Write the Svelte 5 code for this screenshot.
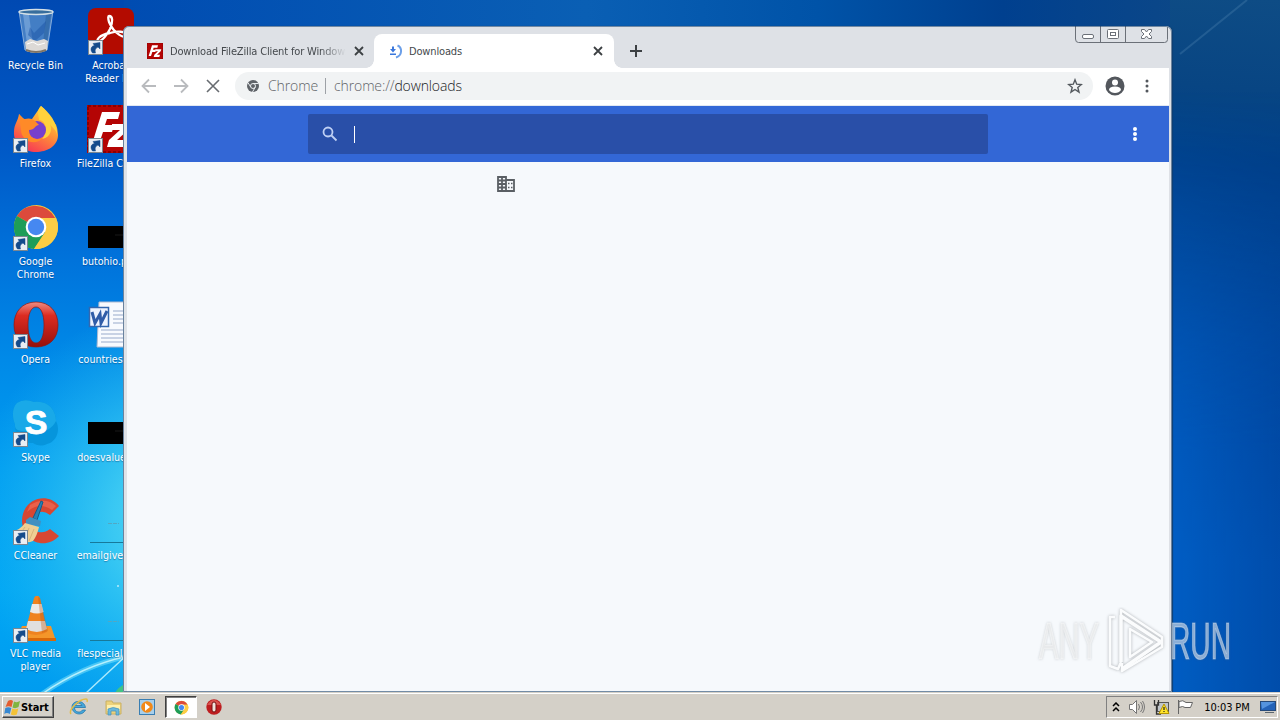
<script>
  const desktopLeft = [
    { icon: 'bin', lines: ['Recycle Bin'], shortcut: false },
    { icon: 'firefox', lines: ['Firefox'], shortcut: true },
    { icon: 'chrome', lines: ['Google', 'Chrome'], shortcut: true },
    { icon: 'opera', lines: ['Opera'], shortcut: true },
    { icon: 'skype', lines: ['Skype'], shortcut: true },
    { icon: 'ccleaner', lines: ['CCleaner'], shortcut: true },
    { icon: 'vlc', lines: ['VLC media', 'player'], shortcut: true }
  ];

  const desktopRight = [
    { icon: 'acrobat', lines: ['Acrobat', 'Reader DC'], shortcut: true },
    { icon: 'filezilla', lines: ['FileZilla Client'], shortcut: true },
    { icon: 'black', lines: ['butohio.png'], shortcut: false },
    { icon: 'word', lines: ['countriese.rtf'], shortcut: false },
    { icon: 'black', lines: ['doesvalue.jpg'], shortcut: false },
    { icon: 'line', lines: ['emailgive.png'], shortcut: false },
    { icon: 'line', lines: ['flespecial.png'], shortcut: false }
  ];

  const columns = [desktopLeft, desktopRight];
</script>

{#snippet chromeLogo(size)}
  <svg width={size} height={size} viewBox="0 0 48 48">
    <circle cx="24" cy="24" r="22" fill="#fbc93b" />
    <path d="M24 24 4.900 13A22 22 0 0 1 43.100 15H24z" fill="#dc4a3c" />
    <path d="M4.900 13A22 22 0 0 0 22 46l11-17-9-5z" fill="#1e9d58" />
    <path d="M44 15H24v9l9.500 5.500L22 46A22 22 0 0 0 44 15z" fill="#fccd45" />
    <circle cx="24" cy="24" r="10.300" fill="#fff" />
    <circle cx="24" cy="24" r="8.200" fill="#4688f1" />
  </svg>
{/snippet}

{#snippet fz(size)}
  <svg width={size} height={size} viewBox="0 0 48 48">
    <rect width="48" height="48" fill="#b40404" />
    <rect x="1" y="1" width="46" height="46" fill="none" stroke="#8a0000" stroke-width="2" stroke-dasharray="3 2" />
    <path d="M15 7h18l-2 7H20l-2 6h9l-2 7h-9l-4 12H5z" fill="#fff" />
    <path d="M25 19h18l-2 6-11 10h9l-2 7H20l2-7 11-10h-8z" fill="#fff" />
  </svg>
{/snippet}

{#snippet appIcon(name)}
  {#if name === 'chrome'}
    {@render chromeLogo(48)}
  {:else if name === 'filezilla'}
    {@render fz(48)}
  {:else}
    <svg width="48" height="48" viewBox="0 0 48 48">
      {#if name === 'bin'}
        <path d="m7 4 6 39q11 5 22 0l6-39z" fill="#5a8fca" fill-opacity=".75" stroke="#86addb" />
        <path d="m11 7 4 30h6L17 8z" fill="#9dc1e8" opacity=".45" />
        <path d="m34 7-3 30 4-1 4-29z" fill="#285e98" opacity=".5" />
        <path d="m18 20 4 6 9-9 3-3-2 12-9 8-7-6z" fill="#1c54a5" opacity=".5" />
        <path d="m13 35 5-3 7 2 7-2 4 2-1 9q-10 5-21 1z" fill="#dcd9d6" />
        <path d="m15 37 6-2 5 3 7-2" fill="none" stroke="#fff" />
        <path d="M14 43q10 4 20 0" fill="none" stroke="#807567" stroke-width="2" />
        <ellipse cx="24" cy="5" rx="17" ry="2.500" fill="#386e9d" stroke="#d4e0e6" stroke-width="1.300" />
      {:else if name === 'firefox'}
        <defs>
          <linearGradient id="ff" x1=".8" y1="0" x2=".25" y2="1">
            <stop offset="0" stop-color="#ffe23f" />
            <stop offset=".45" stop-color="#ff9636" />
            <stop offset="1" stop-color="#f63057" />
          </linearGradient>
        </defs>
        <path d="M29 1q7 6 8 11 9 6 9 18c0 11-11 17-22 17S1 39 2 27c0-8 4-11 5-18l6 6 7-1z" fill="url(#ff)" />
        <path d="M29 1c-5 5-2 10-2 14 8 1 9 13 3 19 10-2 10-11 8-15 3 5 6 5 7 11C46 18 37 7 29 1z" fill="#ffd13c" />
        <circle cx="25" cy="25" r="9" fill="#7740cd" />
        <path d="M7 9q3 5 6 5c3-1 7-1 10 2l4 4c-4 0-4 5-10 5 0 8 7 11 14 8-9 9-22 2-22-8z" fill="#ff8a28" />
      {:else if name === 'opera'}
        <defs>
          <linearGradient id="op" x1="0" y1="0" x2="0" y2="1">
            <stop offset="0" stop-color="#ef8d82" />
            <stop offset=".3" stop-color="#dc2c21" />
            <stop offset="1" stop-color="#97100c" />
          </linearGradient>
        </defs>
        <path fill-rule="evenodd" d="M24 1C10 1 2 11 2 24s8 22 22 22 22-9 22-22S38 1 24 1zm0 5c5 0 8 7 8 18s-3 18-8 18-8-7-8-18 3-18 8-18z" fill="url(#op)" stroke="#8d1712" stroke-width=".7" />
      {:else if name === 'skype'}
        <path d="M5 4Q12-1 22 3c13-2 22 7 22 19 5 10 0 21-9 23-6 3-11 1-14-1C9 45 2 35 3 25 0 18 0 9 5 4z" fill="#0695dc" />
        <path d="M5 4Q12-1 22 3c13-2 22 7 22 19-5 10-16 13-23 10C9 33 2 32 3 25 0 18 0 9 5 4z" fill="#19a9e8" />
        <text x="24" y="35" text-anchor="middle" class="skype-letter">S</text>
      {:else if name === 'ccleaner'}
        <path d="m47 9-9 9q-11-8-17 4c-4 10 7 18 17 10l9 7c-13 14-36 7-37-15C10 2 35-6 47 9z" fill="#d84732" />
        <path d="M18 8q15-9 26 1l-4 4q-13-9-25 2z" fill="#e9604a" />
        <path d="m29 4 2 1-6 18-4-2z" fill="#2383b7" stroke="#145b8b" />
        <path d="m14 23 4-3 11 4-1 5-14-1z" fill="#428fc0" />
        <path d="m13 26 14 4q-2 9-6 14-12 5-20-10 7-1 12-8z" fill="#efcf94" />
        <path d="m13 30-5 7m9-6-4 11m9-10-5 12" stroke="#d9b479" fill="none" />
      {:else if name === 'vlc'}
        <path d="M10 31h29l5 15H3z" fill="#f4962a" />
        <path d="M3 43h41v3H3z" fill="#d86809" />
        <path d="m22 3 1.500-2h3L28 3l7 34q-11 6-22 0z" fill="#ef8320" />
        <path d="m20 9 9.500 0 2 8q-6 3-13.500 0z" fill="#ece9e7" />
        <path d="m16 26 17 0 2 8q-10 6-21 0z" fill="#e0dfde" />
        <path d="m26 2 2 1 8 33-6 2z" fill="#ba5a14" opacity=".35" />
      {:else if name === 'acrobat'}
        <rect x="1" y="1" width="46" height="46" rx="8" fill="#b30b00" />
        <path d="M22 9c4 0 4 6 1 13-3 6-8 12-11 12-4 0 0-6 11-8 7-2 16-2 16 2 0 5-12-1-17-13-1-4-1-6 0-6z" fill="none" stroke="#fff" stroke-width="2.300" />
      {:else if name === 'word'}
        <path d="M12 1h36v45H10z" fill="#f8fafe" stroke="#afbad0" />
        <path d="M26 10h22M26 14h22M26 18h22M26 22h22M14 29h34M14 33h34M14 37h34M14 41h34" stroke="#98aacb" />
        <rect x="2.500" y="6.500" width="19" height="19" fill="#eef3ff" stroke="#3467af" stroke-width="1.500" />
        <path d="m5 11 3 11 5-9 1 9 6-12" fill="none" stroke="#305ca8" stroke-width="3" />
      {:else if name === 'black'}
        <rect x="1" y="23" width="47" height="22" fill="#000" />
        <path d="M28 32h8" stroke="#191919" />
      {:else if name === 'line'}
        <path d="M3 45.500h45" stroke="#17799a" />
        <path d="M21 26.500h11" stroke="#53a7c3" stroke-dasharray="4 1" />
      {/if}
    </svg>
  {/if}
{/snippet}

{#snippet dots(color, r)}
  <svg width="20" height="20" viewBox="0 0 20 20" fill={color}>
    <circle cx="10" cy="5" {r} />
    <circle cx="10" cy="10" {r} />
    <circle cx="10" cy="15" {r} />
  </svg>
{/snippet}

<div class="screen">
  <svg class="wallpaper" width="1280" height="720" viewBox="0 0 1280 720">
    <defs>
      <linearGradient id="left" x1="0" y1="0" x2="0" y2="1">
        <stop offset="0" stop-color="#0049b2" />
        <stop offset=".2" stop-color="#0058c6" />
        <stop offset=".35" stop-color="#0071da" />
        <stop offset=".5" stop-color="#008ae8" />
        <stop offset=".65" stop-color="#009df1" />
        <stop offset=".82" stop-color="#00a6f4" />
        <stop offset="1" stop-color="#0099ee" />
      </linearGradient>
      <radialGradient id="glow" cx="190" cy="520" r="220" gradientUnits="userSpaceOnUse">
        <stop offset="0" stop-color="#62e0f4" stop-opacity="1" />
        <stop offset=".35" stop-color="#48d2f3" stop-opacity=".8" />
        <stop offset="1" stop-color="#28bdf0" stop-opacity="0" />
      </radialGradient>
      <linearGradient id="top" x1="124" x2="1280" y1="0" y2="0" gradientUnits="userSpaceOnUse">
        <stop offset="0" stop-color="#004cb2" />
        <stop offset=".4" stop-color="#0a5fb4" />
        <stop offset=".6" stop-color="#0053a8" />
        <stop offset=".76" stop-color="#00408f" />
        <stop offset="1" stop-color="#124b84" />
      </linearGradient>
      <linearGradient id="right" x1="1280" y1="0" x2="1225" y2="700" gradientUnits="userSpaceOnUse">
        <stop offset="0" stop-color="#0e4c85" />
        <stop offset=".13" stop-color="#084583" />
        <stop offset=".24" stop-color="#00408a" />
        <stop offset=".5" stop-color="#004da6" />
        <stop offset=".8" stop-color="#0057b8" />
        <stop offset="1" stop-color="#0057b6" />
      </linearGradient>
      <linearGradient id="rightShade">
        <stop offset="0" stop-color="#0068d8" stop-opacity=".4" />
        <stop offset="1" stop-color="#003b95" stop-opacity=".35" />
      </linearGradient>
      <linearGradient id="shadeFade" x1="0" y1="0" x2="0" y2="1">
        <stop offset="0" stop-color="#000" />
        <stop offset=".6" stop-color="#fff" />
      </linearGradient>
      <mask id="shadeMask">
        <rect x="1170" y="90" width="110" height="602" fill="url(#shadeFade)" />
      </mask>
    </defs>
    <rect width="1280" height="720" fill="url(#left)" />
    <rect width="420" height="720" fill="url(#glow)" />
    <rect x="124" width="1156" height="40" fill="url(#top)" />
    <rect x="1170" width="110" height="692" fill="url(#right)" />
    <rect x="1170" y="90" width="110" height="602" fill="url(#rightShade)" mask="url(#shadeMask)" />
    <path d="M1180 54 1247 0" stroke="#5e91ba" stroke-width="2" opacity=".28" />
    <path d="M42 694Q82 666 128 656" fill="none" stroke="#83e5fb" stroke-width="5" opacity=".5" />
    <path d="M42 694Q82 666 128 656M86 693 128 654" fill="none" stroke="#d1faff" stroke-width="1.500" opacity=".8" />
    <path d="M115 693q3-6 10-9v9z" fill="#41c485" />
    <path d="M117 586h2" stroke="#fff" />
  </svg>

  <div class="desktop">
    {#each columns as column}
      <div class="column">
        {#each column as item}
          <div class="shortcut">
            <div class="pic">
              {@render appIcon(item.icon)}
              {#if item.shortcut}
                <svg class="arrow" width="15" height="15" viewBox="0 0 15 15">
                  <rect x=".5" y=".5" width="14" height="14" fill="#e9eef3" stroke="#7b8792" />
                  <path d="M4.500 13C1.500 9 3.500 6 6.500 5.500L5 3.500l7-1v6.500L10 7C8 8 6.500 9.500 7.500 13z" fill="#144b8b" stroke="#144b8b" stroke-width=".5" />
                </svg>
              {/if}
            </div>
            <div class="label">
              {#each item.lines as line}
                <span>{line}</span>
              {/each}
            </div>
          </div>
        {/each}
      </div>
    {/each}
  </div>

  <div class="window">
    <div class="tabstrip">
      <div class="tab">
        {@render fz(16)}
        <span class="title faded">Download FileZilla Client for Windows</span>
        <svg class="close" width="10" height="10" viewBox="0 0 10 10"><path d="m1 1 8 8m0-8L1 9" /></svg>
      </div>
      <div class="tab active">
        <svg width="16" height="16" viewBox="0 0 16 16">
          <path d="M9.500 2.500c5 2 5 10-1.500 12" fill="none" stroke="#6c9fe8" stroke-width="2" />
          <path d="M4 3.500h2V6h2L5 9.500 2 6h2zM2 10.500h6V12H2z" fill="#3b78dc" />
        </svg>
        <span class="title">Downloads</span>
        <svg class="close" width="10" height="10" viewBox="0 0 10 10"><path d="m1 1 8 8m0-8L1 9" /></svg>
      </div>
      <svg class="plus" width="12" height="12" viewBox="0 0 12 12"><path d="M6 0v12M0 6h12" /></svg>
      <div class="controls">
        <svg width="93" height="17" viewBox="0 0 93 17" fill="none" stroke="#6b7078">
          <path d="M.5 0v13q0 3.500 3 3.500h86q3 0 3-3V0M25.500 0v16M50.500 0v16" />
          <rect x="7.500" y="8.500" width="11" height="4" rx="1.500" fill="#fff" />
          <rect x="32.500" y="3.500" width="11" height="9" rx="1" fill="#fff" />
          <rect x="35.500" y="6.500" width="5" height="3" />
          <path d="M66.500 3.500h3l2 2.500 2-2.500h3v2L74 8l2.500 2.500v2h-3l-2-2.500-2 2.500h-3v-2L69 8l-2.500-2.500z" fill="#fff" />
        </svg>
      </div>
    </div>

    <div class="toolbar">
      <svg width="16" height="16" viewBox="0 0 16 16" class="nav"><path d="M15 8H2M8 1.500 1.500 8 8 14.500" /></svg>
      <svg width="16" height="16" viewBox="0 0 16 16" class="nav"><path d="M1 8h13M8 1.500 14.500 8 8 14.500" /></svg>
      <svg width="16" height="16" viewBox="0 0 16 16" class="nav stop"><path d="m2 2 12 12m0-12L2 14" /></svg>
      <div class="omnibox">
        <svg width="12" height="12" viewBox="0 0 12 12">
          <circle cx="6" cy="6" r="6" fill="#5f6368" />
          <circle cx="6" cy="6" r="2.500" fill="#5f6368" stroke="#e9ecef" />
          <path d="M6 3.500h5.500M3.800 7.200 1 2.700M8.200 7.200 5.500 12" stroke="#e9ecef" />
        </svg>
        <span class="origin">Chrome</span>
        <span class="divider"></span>
        <span class="url">chrome://<b>downloads</b></span>
        <svg class="star" width="16" height="16" viewBox="0 0 16 16">
          <path d="m8 1.800 1.700 4.400 4.700.3-3.600 3 1.200 4.600L8 11.500l-4 2.600 1.200-4.600-3.600-3 4.700-.3z" fill="none" stroke="#54595e" stroke-width="1.400" />
        </svg>
      </div>
      <svg class="account" width="20" height="20" viewBox="0 0 20 20">
        <circle cx="10" cy="10" r="9.500" fill="#53575d" />
        <circle cx="10" cy="6.500" r="3" fill="#fff" />
        <path d="M4 14q0-3.500 6-3.500t6 3.500q-2 3-6 3t-6-3z" fill="#fff" />
      </svg>
      {@render dots('#53575d', 1.5)}
    </div>

    <div class="bar">
      <div class="search">
        <svg width="16" height="16" viewBox="0 0 16 16" fill="none" stroke="#bfd0f4" stroke-width="1.800">
          <circle cx="6" cy="6" r="4.500" />
          <path d="m9.500 9.500 5 5" />
        </svg>
        <span class="caret"></span>
      </div>
      <div class="more">{@render dots('#fff', 2)}</div>
    </div>

    <div class="content">
      <svg width="18" height="16" viewBox="0 0 18 16" fill="none" stroke="#5a5f64">
        <path d="M1 1h8v14H1zM9 4h8v11H9" stroke-width="1.800" />
        <path d="M5 1v14M1 4.500h8M1 8h8M1 11.500h8" stroke-width="1.800" />
        <path d="M11 7.500h1.500M14 7.500h1.500M11 11.500h1.500M14 11.500h1.500" stroke-width="1.700" />
      </svg>
    </div>
  </div>

  <svg class="watermark" width="210" height="70" viewBox="0 0 210 70">
    <g class="brand">
      <text x="4" y="52" textLength="60" lengthAdjust="spacingAndGlyphs">ANY</text>
      <text x="135" y="52" textLength="61" lengthAdjust="spacingAndGlyphs">RUN</text>
    </g>
    <g fill="none" stroke="#fff" stroke-width="3.500" stroke-linejoin="round" opacity=".6" class="mark">
      <path d="M86 55V9l40 26-39 27" />
      <path d="M80 10h-5v49l8 3 3-7M86 9V3l41 27v10L87 64v-8M95 22v28l22-15z" stroke-width="2.500" />
    </g>
  </svg>

  <div class="taskbar">
    <div class="start">
      <svg width="17" height="17" viewBox="0 0 17 17">
        <path d="m4 2q3-2 5 0L7.500 8q-3-1.500-6 0z" fill="#e35d2f" />
        <path d="M10 2.500q3 1.500 6-.5l-1.500 6q-3 2-6 .5z" fill="#80b541" />
        <path d="M1.300 9q3-1.500 6 0l-1.500 6q-3-2-5.500 0z" fill="#3788d1" />
        <path d="M8.300 9.500q3 1.500 6 0l-1.500 6q-3 1.500-6 0z" fill="#f4c236" />
      </svg>
      <span>Start</span>
    </div>
    <div class="quick">
      <svg width="20" height="20" viewBox="0 0 20 20">
        <path d="M16.500 10.500H5.500c0 5 6 6 8 2.500h3C13 20 3 17 3 10S15 2 16.500 10.500zm-10.500-2h7q-3-5-7 0z" fill="#45a8dc" stroke="#2777aa" stroke-width=".8" />
        <path d="M2 17C-1 13 10 2 17 2c2 0 1 3 1 3" fill="none" stroke="#e5bd44" stroke-width="1.500" />
      </svg>
      <svg width="20" height="20" viewBox="0 0 20 20">
        <path d="M3 4h6l1 2h8v11H3z" fill="#edd27b" stroke="#c9b064" />
        <path d="M4 8h13v6H4z" fill="#fff0ae" />
        <path d="M5 18v-6q5-3 11 0v6h-3v-4H8v4z" fill="#6bb8dc" stroke="#4390b9" stroke-width=".7" />
      </svg>
      <svg width="20" height="20" viewBox="0 0 20 20">
        <rect x="2.500" y="2.500" width="15" height="15" fill="#a7cfeb" stroke="#397eb2" />
        <circle cx="10" cy="10" r="5.800" fill="#f28918" />
        <path d="m8 6 5 4-5 4z" fill="#fff" />
      </svg>
    </div>
    <div class="pressed">{@render chromeLogo(15)}</div>
    <svg class="opera-small" width="16" height="16" viewBox="0 0 16 16">
      <circle cx="8" cy="8" r="7.700" fill="#bd1e20" />
      <path d="M1 6Q8-4 15 6" fill="#e56a63" opacity=".7" />
      <rect x="6" y="3" width="4" height="10" rx="2" fill="#f0e4dc" stroke="#761012" />
    </svg>
    <div class="tray">
      <svg width="8" height="10" viewBox="0 0 8 10"><path d="m1 4 3-3 3 3M1 9l3-3 3 3" fill="none" stroke="#000" stroke-width="1.500" /></svg>
      <svg class="speaker" width="18" height="16" viewBox="0 0 18 16">
        <path d="M1.500 5.500h3l4-4v13l-4-4h-3z" fill="#fff" stroke="#747474" />
        <path d="M10.500 5q2 3 0 6m2-8q4 5 0 10m2-11q4 6 0 12" fill="none" stroke="#777" />
      </svg>
      <svg class="network" width="17" height="16" viewBox="0 0 17 16">
        <rect x="4.500" y="3.500" width="11" height="9" fill="#c0c5ca" stroke="#555" />
        <path d="M1.500 1v5h4V1M3.500 6v9H8" fill="none" stroke="#333" stroke-width="1.300" />
        <path d="m11 5 5 9.500H6z" fill="#ffe42a" stroke="#b79500" />
        <path d="M11 8v3m0 1v1" stroke="#222" stroke-width="1.200" />
      </svg>
      <svg class="flag" width="17" height="16" viewBox="0 0 17 16">
        <path d="M1.500 1v14M2 2.500q4-2 7 1h6.500l-2 5H8q-2-2-6 0z" fill="#fff" stroke="#656565" />
      </svg>
      <span class="clock">10:03 PM</span>
      <svg width="16" height="14" viewBox="0 0 16 14">
        <rect x=".5" y="1.500" width="15" height="9" fill="#2463b8" stroke="#264a79" />
        <path d="M1 2h14L2 9z" fill="#5594de" />
        <path d="M5 12.500h9" stroke="#5c666e" />
      </svg>
    </div>
  </div>
</div>

<style>
  :global(body) {
    margin: 0;
    overflow: hidden;
  }

  .screen {
    position: relative;
    width: 1280px;
    height: 720px;
    overflow: hidden;
    font-family: 'DejaVu Sans Condensed', 'DejaVu Sans', sans-serif;
    font-size: 11px;
  }

  svg {
    display: block;
    flex: none;
  }

  .wallpaper {
    position: absolute;
    inset: 0;
  }

  .desktop {
    position: absolute;
    top: 7px;
    left: -2px;
    display: flex;
  }

  .column {
    width: 75px;
  }

  .shortcut {
    height: 98px;
    display: flex;
    flex-direction: column;
    align-items: center;
  }

  .pic {
    position: relative;
    width: 48px;
    height: 48px;
    margin-bottom: 4px;
  }

  .arrow {
    position: absolute;
    left: 1px;
    bottom: 0;
  }

  .label {
    display: flex;
    flex-direction: column;
    align-items: center;
    color: #fff;
    font-size: 10.5px;
    line-height: 13px;
    letter-spacing: 0.05px;
    white-space: nowrap;
    text-shadow: 0 1px 1px rgba(0, 32, 80, 0.4);
  }

  .skype-letter {
    font: bold 34px 'Liberation Sans', sans-serif;
    fill: #fff;
    stroke: #fff;
    stroke-width: 0.8px;
  }

  .window {
    position: absolute;
    top: 26px;
    left: 123px;
    width: 1042px;
    height: 666px;
    box-sizing: content-box;
    border: solid #dee1e6;
    border-width: 0 3px;
    outline: 1px solid rgba(28, 66, 108, 0.6);
    outline-offset: -1px;
    border-left: 4px solid #dfe3e8;
    border-radius: 6px 6px 0 0;
    background: #f6f9fc;
    display: flex;
    flex-direction: column;
    overflow: hidden;
    box-shadow: 1px 0 1px #103f70;
  }

  .tabstrip {
    height: 42px;
    background: #dee1e6;
    display: flex;
    align-items: flex-end;
    box-shadow: inset 0 1px #f1f3f5;
    flex: none;
  }

  .tab {
    width: 247px;
    height: 34px;
    box-sizing: border-box;
    padding: 0 10px 0 20px;
    display: flex;
    align-items: center;
    gap: 7px;
    color: #45494d;
  }

  .tab.active {
    position: relative;
    width: 240px;
    padding: 0 11px 0 14px;
    gap: 5px;
    background: #fff;
    border-radius: 8px 8px 0 0;
  }

  .tab.active::before,
  .tab.active::after {
    content: '';
    position: absolute;
    bottom: 0;
    left: -8px;
    width: 8px;
    height: 8px;
    background: radial-gradient(circle at 0 0, transparent 7.5px, #fff 8px);
  }

  .tab.active::after {
    left: auto;
    right: -8px;
    background: radial-gradient(circle at 100% 0, transparent 7.5px, #fff 8px);
  }

  .title {
    flex: 1;
    overflow: hidden;
    white-space: nowrap;
    letter-spacing: -0.15px;
  }

  .faded {
    mask-image: linear-gradient(to right, #000 150px, transparent 176px);
  }

  .close,
  .plus {
    fill: none;
    stroke: #3c4043;
    stroke-width: 1.8;
  }

  .plus {
    margin: 0 0 11px 16px;
    stroke-width: 2;
  }

  .controls {
    align-self: flex-start;
    margin-left: auto;
    margin-right: 1px;
  }

  .toolbar {
    height: 38px;
    box-sizing: border-box;
    border-bottom: 1px solid #e2e8f2;
    background: #fff;
    display: flex;
    align-items: center;
    gap: 16px;
    padding: 0 12px 2px 14px;
    flex: none;
  }

  .nav {
    fill: none;
    stroke: #b9bbbe;
    stroke-width: 1.8;
  }

  .stop {
    stroke: #686c71;
    stroke-width: 1.6;
  }

  .omnibox {
    flex: 1;
    height: 28px;
    margin-left: -2px;
    margin-right: -4px;
    box-sizing: border-box;
    padding: 0 10px 0 12px;
    border-radius: 14px;
    background: #f1f3f4;
    display: flex;
    align-items: center;
    font-family: 'Open Sans', 'Noto Sans', sans-serif;
    font-size: 14px;
    font-weight: 300;
    color: #5f6368;
  }

  .origin {
    margin-left: 9px;
    letter-spacing: -0.1px;
  }

  .divider {
    width: 1px;
    height: 16px;
    margin: 0 8px 0 7px;
    background: #9da1a6;
  }

  .url {
    letter-spacing: -0.13px;
  }

  .url b {
    font-weight: 300;
    color: #202124;
  }

  .star {
    margin-left: auto;
  }

  .account {
    margin-right: -4px;
  }

  .bar {
    height: 56px;
    background: #3367d6;
    display: grid;
    grid-template-columns: 1fr 680px 1fr;
    align-items: center;
    flex: none;
  }

  .search {
    grid-column: 2;
    height: 40px;
    box-sizing: border-box;
    padding-left: 14px;
    border-radius: 2px;
    background: #294fa8;
    display: flex;
    align-items: center;
    gap: 16px;
  }

  .caret {
    width: 1px;
    height: 17px;
    background: #fff;
  }

  .more {
    justify-self: end;
    padding-right: 24px;
  }

  .content {
    padding: 14px 0 0 370px;
  }

  .watermark {
    position: absolute;
    left: 1035px;
    top: 607px;
  }

  .brand {
    font: 51px 'Liberation Sans Narrow', 'Liberation Sans', sans-serif;
    fill: rgba(255, 255, 255, 0.5);
    stroke: rgba(255, 255, 255, 0.35);
    stroke-width: 1.2px;
    filter: drop-shadow(0 0 1px rgba(100, 105, 110, 0.5));
  }

  .mark {
    filter: drop-shadow(0 0 1.5px rgba(90, 95, 100, 0.8));
  }

  .taskbar {
    position: absolute;
    left: 0;
    right: 0;
    bottom: 0;
    height: 28px;
    box-sizing: border-box;
    padding: 2px 2px 1px;
    border-top: 1px solid #d4d0c8;
    box-shadow: inset 0 1px #fff;
    background: #d4d0c8;
    display: flex;
    align-items: center;
  }

  .start {
    width: 52px;
    height: 22px;
    box-sizing: border-box;
    border: 1px solid;
    border-color: #fff #404040 #404040 #fff;
    box-shadow: inset -1px -1px #808080;
    display: flex;
    align-items: center;
    padding-left: 1px;
    font-weight: bold;
    letter-spacing: -0.1px;
  }

  .quick {
    display: flex;
    gap: 14px;
    margin-left: 15px;
  }

  .pressed {
    width: 32px;
    height: 22px;
    box-sizing: border-box;
    margin-left: 8px;
    border: 1px solid;
    border-color: #404040 #fff #fff #404040;
    box-shadow: inset 1px 1px #808080;
    background: #fff;
    display: flex;
    align-items: center;
    justify-content: center;
  }

  .opera-small {
    margin-left: 9px;
  }

  .tray {
    width: 172px;
    height: 22px;
    box-sizing: border-box;
    margin-left: auto;
    padding: 0 1px 0 5px;
    border: 1px solid;
    border-color: #808080 #fff #fff #808080;
    display: flex;
    align-items: center;
  }

  .speaker {
    margin-left: 8px;
  }

  .network {
    margin-left: 7px;
  }

  .flag {
    margin-left: 7px;
  }

  .clock {
    margin: 0 auto;
    letter-spacing: -0.1px;
    white-space: nowrap;
  }
</style>
